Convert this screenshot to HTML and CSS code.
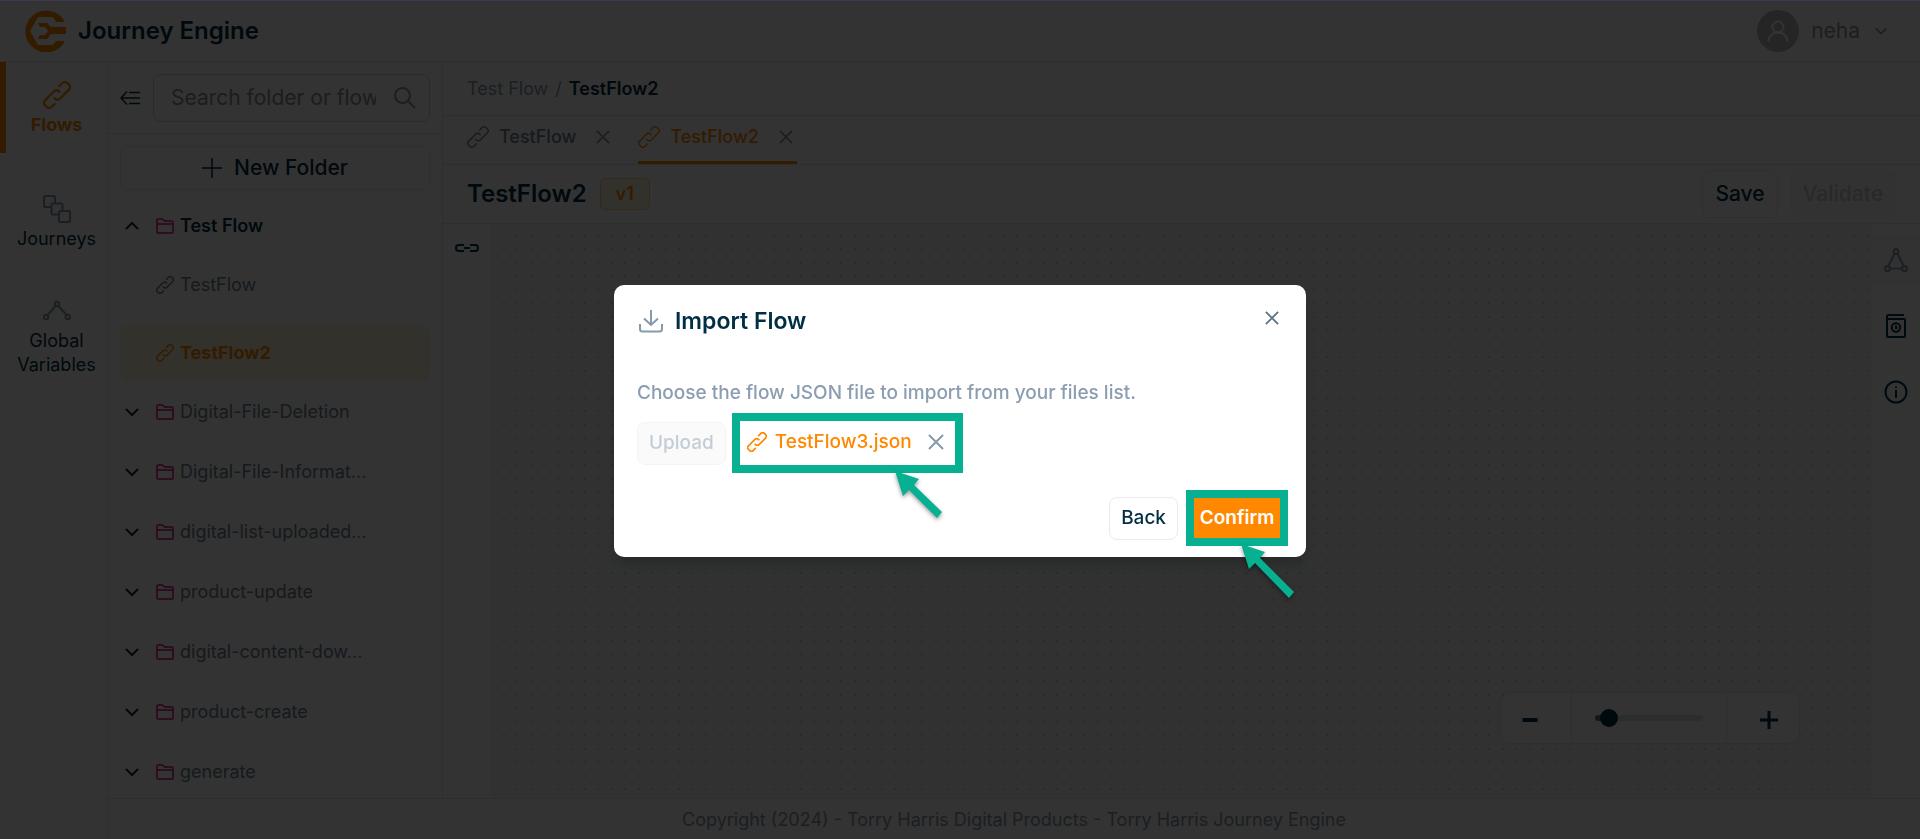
FILE: index.html
```html
<!DOCTYPE html>
<html lang="en">
<head>
    <meta charset="UTF-8">
    <meta name="viewport" content="width=device-width, initial-scale=1.0">
    <title>Journey Engine</title>
    <link rel="stylesheet" href="styles.css">
</head>
<body>
    <svg class="sprite" aria-hidden="true">
        <symbol id="link" viewBox="0 0 24 24">
            <g transform="translate(12 12) rotate(-45)">
                <path d="M6 -4H10.5A3 3 0 0 1 13.5 -1V1A3 3 0 0 1 10.5 4H-.5A3 3 0 0 1 -3.5 1V-.5"/>
                <path d="M-6 4H-10.5A3 3 0 0 1 -13.5 1V-1A3 3 0 0 1 -10.5 -4H.5A3 3 0 0 1 3.5 -1V.5"/>
            </g>
        </symbol>
        <symbol id="close" viewBox="0 0 16 16"><path d="M1 1L15 15M15 1L1 15"/></symbol>
        <symbol id="down" viewBox="0 0 16 10"><path d="M2 2L8 8L14 2"/></symbol>
        <symbol id="up" viewBox="0 0 16 10"><path d="M2 8L8 2L14 8"/></symbol>
        <symbol id="folder" viewBox="0 0 18 16">
            <path d="M1 14V2Q1 1 2 1H6.5L8.5 3H16Q17 3 17 4V14Q17 15 16 15H2Q1 15 1 14ZM1 6H17"/>
        </symbol>
    </svg>

    <header class="header">
        <svg class="logo" viewBox="0 0 42 42" aria-hidden="true">
            <path class="logo-ring" d="M41 12A21 21 0 1 0 41 31H32L29 35H14L6 21L14 7H29L32 12Z"/>
            <path class="logo-ring" d="M14 13H23L27 17H42V24H27L23 29H14L16 25H21L24 21L21 17H16Z"/>
        </svg>
        <h1>Journey Engine</h1>
        <button class="user" type="button">
            <span class="avatar"><svg viewBox="0 0 22 22" aria-hidden="true"><circle cx="11" cy="7" r="5.5"/><path d="M1.500 21.500C2 9.500 20 9.500 20.500 21.500"/></svg></span>
            neha
            <svg class="user-arrow" aria-hidden="true"><use href="#down"/></svg>
        </button>
    </header>

    <div class="body">
        <nav class="sidebar">
            <a href="#" class="nav-item active">
                <svg aria-hidden="true"><use href="#link"/></svg>
                Flows
            </a>
            <a href="#" class="nav-item">
                <svg viewBox="0 0 28 28" aria-hidden="true">
                    <rect x="1" y="1" width="11" height="11" rx="1.5"/>
                    <rect x="8.500" y="8.500" width="11" height="11" rx="1.5"/>
                    <rect x="16" y="16" width="11" height="11" rx="1.5"/>
                </svg>
                Journeys
            </a>
            <a href="#" class="nav-item">
                <svg viewBox="0 0 28 28" aria-hidden="true"><path d="M12.500 9L4.500 18M15.500 9L23.500 18"/><circle cx="14" cy="7" r="2.200"/><circle cx="3.200" cy="20" r="2.200"/><circle cx="24.800" cy="20" r="2.200"/></svg>
                Global<br>Variables
            </a>
        </nav>

        <div class="content">
            <div class="workspace">
                <aside class="folders">
                    <div class="search-row">
                        <button class="icon-btn" type="button" aria-label="Collapse panel">
                            <svg class="collapse" viewBox="0 0 20 14" aria-hidden="true"><path d="M7 0.500L1 7L7 13.500M1 7H20M9 1.500H20M9 12.500H20"/></svg>
                        </button>
                        <label class="search">
                            <input type="text" placeholder="Search folder or flow" aria-label="Search folder or flow">
                            <svg viewBox="0 0 22 22" aria-hidden="true"><circle cx="8.500" cy="8.500" r="7.500"/><path d="M14 14L21 21"/></svg>
                        </label>
                    </div>
                    <div class="tree">
                        <button class="new-folder" type="button">
                            <svg viewBox="0 0 20 20" aria-hidden="true"><path d="M10 0V20M0 10H20"/></svg>
                            New Folder
                        </button>
                        <ul>
                            <li><button class="row open" type="button"><svg class="arrow"><use href="#up"/></svg><svg class="folder"><use href="#folder"/></svg>Test Flow</button></li>
                            <li><button class="row flow" type="button"><svg class="chain"><use href="#link"/></svg>TestFlow</button></li>
                            <li><button class="row flow selected" type="button"><svg class="chain"><use href="#link"/></svg>TestFlow2</button></li>
                            <li><button class="row" type="button"><svg class="arrow"><use href="#down"/></svg><svg class="folder"><use href="#folder"/></svg>Digital-File-Deletion</button></li>
                            <li><button class="row" type="button"><svg class="arrow"><use href="#down"/></svg><svg class="folder"><use href="#folder"/></svg>Digital-File-Informat...</button></li>
                            <li><button class="row" type="button"><svg class="arrow"><use href="#down"/></svg><svg class="folder"><use href="#folder"/></svg>digital-list-uploaded...</button></li>
                            <li><button class="row" type="button"><svg class="arrow"><use href="#down"/></svg><svg class="folder"><use href="#folder"/></svg>product-update</button></li>
                            <li><button class="row" type="button"><svg class="arrow"><use href="#down"/></svg><svg class="folder"><use href="#folder"/></svg>digital-content-dow...</button></li>
                            <li><button class="row" type="button"><svg class="arrow"><use href="#down"/></svg><svg class="folder"><use href="#folder"/></svg>product-create</button></li>
                            <li><button class="row" type="button"><svg class="arrow"><use href="#down"/></svg><svg class="folder"><use href="#folder"/></svg>generate</button></li>
                        </ul>
                    </div>
                </aside>

                <main class="editor">
                    <div class="breadcrumb"><a href="#">Test Flow</a><span>/</span><strong>TestFlow2</strong></div>
                    <div class="tabs">
                        <div class="tab">
                            <svg class="chain" aria-hidden="true"><use href="#link"/></svg>
                            <a href="#">TestFlow</a>
                            <button class="icon-btn" type="button" aria-label="Close TestFlow"><svg class="x"><use href="#close"/></svg></button>
                        </div>
                        <div class="tab active">
                            <svg class="chain" aria-hidden="true"><use href="#link"/></svg>
                            <a href="#">TestFlow2</a>
                            <button class="icon-btn" type="button" aria-label="Close TestFlow2"><svg class="x"><use href="#close"/></svg></button>
                        </div>
                    </div>
                    <div class="title-row">
                        <h2>TestFlow2</h2>
                        <span class="version">v1</span>
                        <button class="btn save" type="button">Save</button>
                        <button class="btn" type="button" disabled>Validate</button>
                    </div>
                    <div class="stage">
                        <div class="left-tools">
                            <button class="icon-btn" type="button" aria-label="Connector">
                                <svg class="connector" viewBox="0 0 24 8" aria-hidden="true"><path d="M9 1H4Q1 1 1 4Q1 7 4 7H9M9 4H15M15 1H20Q23 1 23 4Q23 7 20 7H15"/></svg>
                            </button>
                        </div>
                        <div class="canvas">
                            <div class="zoom">
                                <button type="button" aria-label="Zoom out"><svg viewBox="0 0 18 18"><path class="minus" d="M1.500 9H16.500"/></svg></button>
                                <div class="zoom-track"><input type="range" min="0" max="100" value="6" aria-label="Zoom level"></div>
                                <button type="button" aria-label="Zoom in"><svg viewBox="0 0 18 18"><path d="M9 0V18M0 9H18"/></svg></button>
                            </div>
                        </div>
                        <div class="right-tools">
                            <button class="tool current" type="button" aria-label="Nodes">
                                <svg viewBox="0 0 24 24"><path d="M11 5L4 18.500M13 5L20 18.500M5.500 20.500H18.500"/><circle cx="12" cy="3.500" r="2.500"/><circle cx="3.500" cy="20.500" r="2.500"/><circle cx="20.500" cy="20.500" r="2.500"/></svg>
                            </button>
                            <button class="tool" type="button" aria-label="History">
                                <svg viewBox="0 0 24 24"><path d="M20 1H4.500Q3 1 3 3Q3 5 4.500 5H20Q21 5 21 6V22Q21 23 20 23H4Q3 23 3 22V3"/><circle cx="12" cy="13.500" r="4.200"/><path d="M12 11.500V14H13.500"/></svg>
                            </button>
                            <button class="tool" type="button" aria-label="Info">
                                <svg viewBox="0 0 24 24"><circle cx="12" cy="12" r="10.500"/><path d="M12 10V18M12 6.500V8"/></svg>
                            </button>
                        </div>
                    </div>
                </main>
            </div>
            <footer class="footer">Copyright (2024) - Torry Harris Digital Products - Torry Harris Journey Engine</footer>
        </div>
    </div>

    <div class="overlay">
        <section class="modal" role="dialog" aria-modal="true" aria-labelledby="modalTitle">
            <div class="modal-head">
                <svg class="download" viewBox="0 0 24 24" aria-hidden="true"><path d="M12 1V16M5 9.500L12 16L19 9.500M1 15V20Q1 22.500 3.500 22.500H20.500Q23 22.500 23 20V15"/></svg>
                <h2 id="modalTitle">Import Flow</h2>
                <button class="icon-btn" type="button" aria-label="Close"><svg class="x"><use href="#close"/></svg></button>
            </div>
            <p>Choose the flow JSON file to import from your files list.</p>
            <div class="files">
                <button class="btn" type="button" disabled>Upload</button>
                <div class="mark file">
                    <svg class="chain" aria-hidden="true"><use href="#link"/></svg>
                    <span>TestFlow3.json</span>
                    <button class="icon-btn" type="button" aria-label="Remove file"><svg class="x"><use href="#close"/></svg></button>
                    <svg class="pointer" viewBox="0 0 60 60" aria-hidden="true"><path d="M0 0L24 8L19 14L47 41L42 47L14 19L8 25Z"/></svg>
                </div>
            </div>
            <div class="modal-actions">
                <button class="btn" type="button">Back</button>
                <div class="mark">
                    <button class="confirm" type="button">Confirm</button>
                    <svg class="pointer" viewBox="0 0 60 60" aria-hidden="true"><path d="M0 0L24 8L19 14L53 48L48 54L14 19L8 25Z"/></svg>
                </div>
            </div>
        </section>
    </div>
</body>
</html>
```

FILE: styles.css
```css
* {
    box-sizing: border-box;
}
body {
    font-family: Inter, sans-serif;
    font-size: 18px;
    line-height: 24px;
    color: #002e44;
    background-color: white;
    height: 100vh;
    margin: 0;
    display: flex;
    flex-direction: column;
    overflow: hidden;
}
h1, h2, p, ul {
    margin: 0;
    padding: 0;
}
h1, h2 {
    font-size: 24px;
    line-height: 32px;
    font-weight: 600;
}
ul {
    list-style: none;
}
a {
    color: inherit;
    text-decoration: none;
}
button {
    font: inherit;
    color: inherit;
    background: none;
    border: none;
    padding: 0;
    cursor: pointer;
}
svg {
    fill: none;
    stroke: currentColor;
    stroke-width: 2;
    flex-shrink: 0;
    display: block;
}
.sprite {
    display: none;
}
.icon-btn {
    display: block;
}

/* header */
.header {
    height: 62px;
    flex-shrink: 0;
    display: flex;
    align-items: center;
    padding: 0 32px 0 24px;
    border-bottom: 1px solid #dfe3e6;
}
.logo {
    width: 42px;
    height: 42px;
    margin-right: 12px;
}
.logo-ring {
    fill: #ff8800;
    stroke: none;
}
.user {
    margin-left: auto;
    display: flex;
    align-items: center;
    gap: 12px;
    font-size: 21px;
    color: #869aac;
}
.avatar {
    width: 42px;
    height: 42px;
    border-radius: 50%;
    background-color: #b9b9b9;
    color: white;
    display: grid;
    place-items: center;
}
.avatar svg {
    width: 22px;
    height: 22px;
}
.user-arrow {
    width: 14px;
    height: 10px;
    margin-left: 2px;
}

.body {
    flex: 1;
    min-height: 0;
    display: flex;
}

/* left navigation */
.sidebar {
    width: 108px;
    flex-shrink: 0;
    border-right: 1px solid #e6e9ec;
    display: flex;
    flex-direction: column;
    gap: 23px;
}
.nav-item {
    padding: 19px 0 4px 6px;
    text-align: center;
    border-left: 0 solid #ff8800;
    display: flex;
    flex-direction: column;
    align-items: center;
    gap: 4px;
}
.nav-item svg {
    width: 28px;
    height: 28px;
    color: #869aac;
}
.nav-item rect {
    fill: white;
}
.nav-item.active {
    padding-left: 0;
    padding-bottom: 16px;
    border-left-width: 6px;
    color: #ff8800;
    font-weight: 700;
}
.nav-item.active svg {
    color: #ff8800;
}

.content {
    flex: 1;
    min-width: 0;
    display: flex;
    flex-direction: column;
}
.workspace {
    flex: 1;
    min-height: 0;
    display: flex;
}
.footer {
    height: 41px;
    flex-shrink: 0;
    padding-top: 2px;
    border-top: 1px solid #dfe3e6;
    display: grid;
    place-items: center;
    color: #869aac;
}

/* folder tree */
.folders {
    width: 335px;
    flex-shrink: 0;
    border-right: 1px solid #e6e9ec;
    display: flex;
    flex-direction: column;
}
.search-row {
    height: 72px;
    flex-shrink: 0;
    display: flex;
    align-items: center;
    gap: 13px;
    padding: 0 12px;
    border-bottom: 1px solid #dfe3e6;
}
.collapse {
    width: 20px;
    height: 14px;
    stroke-width: 1.5;
}
.search {
    flex: 1;
    min-width: 0;
    height: 48px;
    display: flex;
    align-items: center;
    gap: 18px;
    padding: 0 13px 0 17px;
    border: 1px solid #ccd3d9;
    border-radius: 8px;
    color: #869aac;
}
.search input {
    flex: 1;
    min-width: 0;
    border: none;
    outline: none;
    padding: 0;
    font: inherit;
    font-size: 21px;
    color: #002e44;
}
.search input::placeholder {
    color: #8b8f96;
}
.search svg {
    width: 22px;
    height: 22px;
}
.tree {
    flex: 1;
    min-height: 0;
    overflow: hidden;
    padding: 12px;
}
.new-folder {
    width: 100%;
    height: 44px;
    display: flex;
    align-items: center;
    justify-content: center;
    gap: 12px;
    border: 1px solid #e6e9ec;
    border-radius: 8px;
    font-size: 21px;
    font-weight: 500;
}
.new-folder svg {
    width: 20px;
    height: 20px;
    stroke-width: 1.5;
}
.tree ul {
    padding-top: 6px;
}
.row {
    width: 100%;
    height: 60px;
    display: flex;
    align-items: center;
    padding-left: 4px;
    border-radius: 8px;
    color: #6c8092;
    white-space: nowrap;
}
.row .arrow {
    width: 16px;
    height: 10px;
    margin-right: 16px;
    color: #002e44;
}
.row .folder {
    width: 18px;
    height: 16px;
    margin-right: 6px;
    color: #e0107c;
    stroke-width: 1.5;
}
.row .chain {
    width: 18px;
    height: 18px;
    margin-right: 6px;
}
.row.open {
    height: 59px;
    color: #002e44;
    font-weight: 600;
}
.row.flow {
    padding-left: 36px;
}
.row.selected {
    height: 56px;
    margin: 10px 0 1px;
    background-color: #fff3da;
    color: #ff8800;
    font-weight: 700;
}

/* editor */
.editor {
    flex: 1;
    min-width: 0;
    display: flex;
    flex-direction: column;
}
.breadcrumb,
.tabs,
.title-row {
    flex-shrink: 0;
    display: flex;
    align-items: center;
    padding: 0 24px;
    border-bottom: 1px solid #dfe3e6;
}
.breadcrumb {
    height: 54px;
    gap: 7px;
    color: #869aac;
}
.breadcrumb strong {
    color: #002e44;
    font-weight: 600;
}
.tabs {
    height: 49px;
    gap: 24px;
    align-items: stretch;
    color: #6c8092;
    font-weight: 500;
}
.tab {
    display: flex;
    align-items: center;
    padding: 0 4px 6px 0;
}
.tab .chain {
    width: 22px;
    height: 22px;
    margin-right: 10px;
    stroke-width: 1.5;
}
.x {
    width: 14px;
    height: 14px;
}
.tab .icon-btn {
    margin-left: 20px;
    color: #869aac;
}
.tab.active {
    border-bottom: 3px solid #ff8800;
    padding-bottom: 4px;
    color: #ff8800;
}
.title-row {
    height: 59px;
}
.version {
    margin: 0 auto 0 13px;
    padding: 3px 15px;
    border: 1px solid #ffc98a;
    border-radius: 5px;
    background-color: #fff3da;
    color: #ff8800;
    font-weight: 600;
}
.btn {
    height: 43px;
    padding: 0 11px;
    background-color: white;
    border: 1px solid #e9ebed;
    border-radius: 8px;
    font-size: 19px;
    font-weight: 500;
}
.btn:disabled {
    background-color: #fafafa;
    border-color: #f3f4f5;
    color: #c3cdd5;
    cursor: default;
}
.title-row .btn {
    height: 48px;
    padding: 0 12px;
    font-size: 21px;
}
.save {
    margin-right: 12px;
}
.stage {
    flex: 1;
    min-height: 0;
    display: flex;
}
.left-tools {
    width: 48px;
    padding: 20px 12px;
}
.connector {
    width: 24px;
    height: 8px;
}
.canvas {
    flex: 1;
    display: flex;
    align-items: flex-end;
    justify-content: flex-end;
    padding: 54px 72px;
    background-color: #f5f6f6;
    background-image:
        radial-gradient(circle at 13px 12px, #cfd3d6 1px, transparent 1px),
        radial-gradient(circle at 26px 12px, #cfd3d6 1px, transparent 1px),
        radial-gradient(circle at 13px 25px, #cfd3d6 1px, transparent 1px),
        radial-gradient(circle at 26px 25px, #cfd3d6 1px, transparent 1px);
    background-size: 27px 27px;
}
.zoom {
    width: 300px;
    height: 52px;
    display: grid;
    grid-template-columns: 70px 1fr 72px;
    background-color: white;
    border: 1px solid #dfe3e6;
    border-radius: 12px;
}
.zoom button {
    display: grid;
    place-items: center;
    padding: 4px 12px 0 0;
}
.zoom button:last-child {
    padding: 4px 0 0 12px;
}
.zoom svg {
    width: 18px;
    height: 18px;
    stroke-width: 3;
}
.zoom .minus {
    stroke-width: 4;
}
.zoom-track {
    display: flex;
    align-items: center;
    padding: 0 23px;
    border: solid #dfe3e6;
    border-width: 0 1px;
}
.zoom input {
    appearance: none;
    width: 100%;
    height: 6px;
    margin: 0;
    border-radius: 3px;
    background: linear-gradient(to right, #5b7282 12px, #dcdfe3 12px);
}
.zoom input::-webkit-slider-thumb {
    appearance: none;
    width: 18px;
    height: 18px;
    border-radius: 50%;
    background-color: #002e44;
}
.right-tools {
    width: 48px;
    padding-top: 12px;
    display: flex;
    flex-direction: column;
    gap: 18px;
}
.tool {
    width: 48px;
    height: 48px;
    display: grid;
    place-items: center;
}
.tool svg {
    width: 24px;
    height: 24px;
}
.tool.current {
    background-color: #fafafa;
    color: #869aac;
}

/* import dialog */
.overlay {
    position: fixed;
    inset: 0;
    display: grid;
    place-items: center;
    padding-top: 2px;
    border-top: 1px solid #40384f;
    background-color: rgba(0, 0, 0, 0.8);
}
.modal {
    width: 692px;
    max-width: 100%;
    padding: 20px 18px 11px 23px;
    background-color: white;
    border-radius: 10px;
    box-shadow: 0 8px 16px rgba(0, 0, 0, 0.2);
    font-size: 19px;
    font-weight: 500;
}
.modal-head {
    display: flex;
    align-items: center;
}
.modal-head h2 {
    font-size: 23px;
}
.modal-head .download {
    width: 24px;
    height: 24px;
    margin: 0 12px 0 2px;
    color: #869aac;
}
.modal-head .icon-btn {
    margin: 0 9px 6px auto;
    color: #5b7282;
}
.modal p {
    margin-top: 44px;
    color: #8b9db0;
}
.files {
    display: flex;
    align-items: center;
    gap: 6px;
    margin-top: 8px;
    margin-bottom: 17px;
}
.mark {
    position: relative;
    border: 8px solid #07b090;
}
.file {
    height: 60px;
    display: flex;
    align-items: center;
    padding: 0 11px 2px 7px;
    color: #ff8800;
}
.file .chain {
    width: 20px;
    height: 20px;
    margin-right: 8px;
}
.file .x {
    width: 16px;
    height: 16px;
}
.file .icon-btn {
    margin-left: 16px;
    color: #869aac;
}
.pointer {
    position: absolute;
    top: 100%;
    left: 55%;
    width: 60px;
    height: 60px;
    margin-top: 6px;
    fill: #07b090;
    stroke: none;
    filter: drop-shadow(0 2px 2px rgba(0, 0, 0, 0.4));
}
.file .pointer {
    left: 72%;
}
.modal-actions {
    display: flex;
    align-items: center;
    justify-content: flex-end;
    gap: 8px;
}
.confirm {
    display: block;
    height: 40px;
    width: 86px;
    background-color: #ff8800;
    color: white;
    font-weight: 600;
}
```
